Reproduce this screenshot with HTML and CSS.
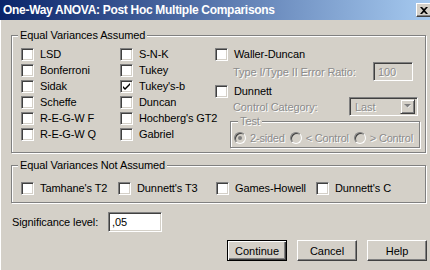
FILE: index.html
```html
<!DOCTYPE html>
<html lang="en">

<head>
  <meta charset="UTF-8">
  <title>One-Way ANOVA: Post Hoc Multiple Comparisons</title>
  <link rel="stylesheet" href="styles.css">
</head>

<body>
  <div class="window">
    <div class="titlebar">
      <span class="title">One-Way ANOVA: Post Hoc Multiple Comparisons</span>
      <span class="close">
        <svg width="8" height="7" viewBox="0 0 8 7"><path d="M0 0h2l2 2 2-2h2L5 3.5 8 7H6L4 5 2 7H0l3-3.5z" fill="#000"/></svg>
      </span>
    </div>

    <div class="content">
      <fieldset class="group group-assumed">
        <legend>Equal Variances Assumed</legend>
        <div class="assumed-grid">
          <div class="col">
            <label class="check"><span class="box"></span>LSD</label>
            <label class="check"><span class="box"></span>Bonferroni</label>
            <label class="check"><span class="box"></span>Sidak</label>
            <label class="check"><span class="box"></span>Scheffe</label>
            <label class="check"><span class="box"></span>R-E-G-W F</label>
            <label class="check"><span class="box"></span>R-E-G-W Q</label>
          </div>
          <div class="col">
            <label class="check"><span class="box"></span>S-N-K</label>
            <label class="check"><span class="box"></span>Tukey</label>
            <label class="check"><span class="box">
              <svg width="9" height="9" viewBox="0 0 9 9"><path d="M1 4l2 2 5-5v2L3 8 1 6z" fill="#000"/></svg>
            </span>Tukey's-b</label>
            <label class="check"><span class="box"></span>Duncan</label>
            <label class="check"><span class="box"></span>Hochberg's GT2</label>
            <label class="check"><span class="box"></span>Gabriel</label>
          </div>
          <div class="col col-wide">
            <label class="check"><span class="box"></span>Waller-Duncan</label>
            <div class="sub-row ratio-row">
              <span class="disabled-text">Type I/Type II Error Ratio:</span>
              <span class="field field-ratio disabled-text">100</span>
            </div>
            <label class="check dunnett"><span class="box"></span>Dunnett</label>
            <div class="sub-row category-row">
              <span class="disabled-text">Control Category:</span>
              <span class="combo">
                <span class="combo-value disabled-text">Last</span>
                <span class="combo-btn">
                  <svg width="7" height="5" viewBox="0 0 7 5"><path d="M1 1h6L4 4z" fill="#fff"/><path d="M0 0h7L3.5 3.5z" fill="#808080"/></svg>
                </span>
              </span>
            </div>
            <fieldset class="group test-group">
              <legend class="disabled-text">Test</legend>
              <div class="radio-row">
                <span class="radio-item"><span class="radio selected"></span><span class="disabled-text">2-sided</span></span>
                <span class="radio-item"><span class="radio"></span><span class="disabled-text">&lt; Control</span></span>
                <span class="radio-item"><span class="radio"></span><span class="disabled-text">&gt; Control</span></span>
              </div>
            </fieldset>
          </div>
        </div>
      </fieldset>

      <fieldset class="group group-not">
        <legend>Equal Variances Not Assumed</legend>
        <div class="not-row">
          <label class="check w97"><span class="box"></span>Tamhane's T2</label>
          <label class="check w98"><span class="box"></span>Dunnett's T3</label>
          <label class="check w100"><span class="box"></span>Games-Howell</label>
          <label class="check"><span class="box"></span>Dunnett's C</label>
        </div>
      </fieldset>

      <div class="sig-row">
        <span class="sig-label">Significance level:</span>
        <span class="field field-sig">,05</span>
      </div>

      <div class="buttons">
        <button class="btn btn-default">Continue</button>
        <button class="btn">Cancel</button>
        <button class="btn">Help</button>
      </div>
    </div>
  </div>
</body>

</html>
```

FILE: styles.css
```css
body {
  margin: 0;
  background-color: #d4d0c8;
  color: #000;
  font-family: "Liberation Sans", Arial, sans-serif;
  font-size: 11px;
  letter-spacing: -0.1px;
}

.window {
  width: 430px;
  height: 270px;
  background-color: #d4d0c8;
  overflow: hidden;
}

.titlebar {
  height: 20px;
  display: flex;
  align-items: center;
  padding-left: 3px;
  background: linear-gradient(to right, #0a246a, #a6caf0);
}

.title {
  color: #fff;
  font-size: 12px;
  font-weight: bold;
  letter-spacing: -0.3px;
}

.close {
  margin-left: auto;
  margin-right: -2px;
  width: 16px;
  height: 14px;
  box-sizing: border-box;
  display: flex;
  align-items: center;
  justify-content: center;
  background-color: #d4d0c8;
  border: 1px solid;
  border-color: #fff #404040 #404040 #fff;
  box-shadow: inset -1px -1px #808080;
}

.content {
  padding: 9px 4px 0 11px;
  box-shadow: inset 1px 0 #fff;
  height: 250px;
  box-sizing: border-box;
}

/* group boxes */
.group {
  margin: 0;
  padding: 0;
  min-width: 0;
  border: 1px solid #808080;
  box-shadow: inset 1px 1px #fff, 1px 1px #fff;
}

.group legend {
  margin-left: 6px;
  padding: 0 2px;
  line-height: 13px;
  background-color: #d4d0c8;
}

.assumed-grid {
  display: grid;
  grid-template-columns: 99px 95px 203px;
  padding: 4px 0 4px 9px;
}

.col {
  display: flex;
  flex-direction: column;
}

.check {
  display: flex;
  align-items: center;
  height: 16px;
  white-space: nowrap;
}

.box {
  width: 13px;
  height: 13px;
  box-sizing: border-box;
  margin-right: 6px;
  flex-shrink: 0;
  display: flex;
  align-items: center;
  justify-content: center;
  background-color: #fff;
  border: 1px solid;
  border-color: #808080 #fff #fff #808080;
  box-shadow: inset 1px 1px #404040, inset -1px -1px #d4d0c8;
}

.disabled-text {
  color: #8c8c8c;
  text-shadow: 1px 1px 0 #fff;
}

.sub-row {
  display: flex;
  align-items: center;
  height: 19px;
  padding-left: 18px;
}

.field {
  box-sizing: border-box;
  display: flex;
  align-items: center;
  padding-left: 4px;
  border: 1px solid;
  border-color: #808080 #fff #fff #808080;
  box-shadow: inset 1px 1px #404040, inset -1px -1px #d4d0c8;
}

.field-ratio {
  margin-left: auto;
  margin-right: 5px;
  width: 40px;
  height: 19px;
  background-color: #d4d0c8;
}

.dunnett {
  margin-top: 2px;
}

.category-row {
  margin-top: -2px;
}

.combo {
  margin-left: auto;
  width: 69px;
  height: 19px;
  box-sizing: border-box;
  display: flex;
  align-items: center;
  padding: 2px;
  background-color: #d4d0c8;
  border: 1px solid;
  border-color: #808080 #fff #fff #808080;
  box-shadow: inset 1px 1px #404040, inset -1px -1px #d4d0c8;
}

.combo-value {
  flex: 1;
  padding-left: 3px;
}

.combo-btn {
  width: 15px;
  height: 15px;
  box-sizing: border-box;
  display: flex;
  align-items: center;
  justify-content: center;
  border: 1px solid;
  border-color: #d4d0c8 #404040 #404040 #d4d0c8;
  box-shadow: inset 1px 1px #fff, inset -1px -1px #808080;
}

.test-group {
  margin: -1px -2px 0 15px;
}

.test-group legend {
  margin-left: 7px;
}

.radio-row {
  display: flex;
  align-items: center;
  gap: 5px;
  height: 16px;
  padding: 2px 0 1px 3px;
  letter-spacing: -0.2px;
}

.radio-item {
  display: flex;
  align-items: center;
  white-space: nowrap;
}

.radio {
  width: 12px;
  height: 12px;
  box-sizing: border-box;
  margin-right: 4px;
  border-radius: 50%;
  border: 1px solid;
  border-color: #808080 #fff #fff #808080;
  box-shadow: inset 1px 1px #404040;
  background-color: #d4d0c8;
  display: flex;
  align-items: center;
  justify-content: center;
}

.radio.selected::after {
  content: "";
  width: 4px;
  height: 4px;
  border-radius: 50%;
  background-color: #808080;
}

.group-not {
  margin-top: 6px;
}

.not-row {
  display: flex;
  padding: 8px 0 6px 9px;
}

.w97 {
  width: 97px;
}

.w98 {
  width: 98px;
}

.w100 {
  width: 100px;
}

.sig-row {
  display: flex;
  align-items: center;
  height: 20px;
  margin-top: 9px;
}

.sig-label {
  width: 96px;
  margin-left: 1px;
}

.field-sig {
  width: 54px;
  height: 20px;
  padding-left: 3px;
  background-color: #fff;
}

.buttons {
  display: flex;
  justify-content: flex-end;
  gap: 10px;
  margin-top: 8px;
  margin-right: -1px;
}

.btn {
  width: 60px;
  height: 21px;
  padding: 0;
  font: inherit;
  color: #000;
  background-color: #d4d0c8;
  border: 1px solid;
  border-color: #fff #404040 #404040 #fff;
  box-shadow: inset -1px -1px #808080;
}

.btn-default {
  border-color: #000;
  box-shadow: inset 1px 1px #fff, inset -1px -1px #404040, inset -2px -2px #808080;
}
```
